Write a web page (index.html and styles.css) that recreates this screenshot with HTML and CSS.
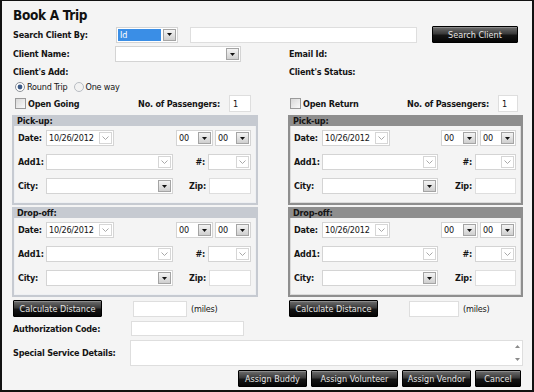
FILE: index.html
```html
<!DOCTYPE html>
<html lang="en">
<head>
    <meta charset="UTF-8">
    <title>Book A Trip</title>
    <link rel="stylesheet" href="styles.css">
</head>
<body>
<div class="page">
    <h1 class="title">Book A Trip</h1>

    <div class="row row-search">
        <span class="lbl w104">Search Client By:</span>
        <span class="combo w62">
            <span class="combo-val selected">Id</span>
            <span class="combo-btn"><svg width="5" height="3" viewBox="0 0 5 3"><path d="M0 0h5L2.5 3z"/></svg></span>
        </span>
        <input class="field w227 gap12" type="text">
        <button class="btn btn-search">Search Client</button>
    </div>

    <div class="cols row-info">
        <div class="col">
            <span class="lbl w103">Client Name:</span>
            <span class="combo w126">
                <span class="combo-val"></span>
                <span class="combo-btn"><svg width="5" height="3" viewBox="0 0 5 3"><path d="M0 0h5L2.5 3z"/></svg></span>
            </span>
        </div>
        <div class="col"><span class="lbl">Email Id:</span></div>
    </div>

    <div class="cols row-info row-add">
        <div class="col"><span class="lbl">Client's Add:</span></div>
        <div class="col"><span class="lbl">Client's Status:</span></div>
    </div>

    <div class="row row-radio">
        <span class="radio on"><svg width="10" height="10" viewBox="0 0 10 10"><circle cx="5" cy="5" r="4.5" fill="#fff" stroke="#8a8f96"/><circle cx="5" cy="5" r="2.4" fill="#3c5a86"/></svg></span>
        <span class="txt">Round Trip</span>
        <span class="radio"><svg width="10" height="10" viewBox="0 0 10 10"><circle cx="5" cy="5" r="4.5" fill="#f2f2f2" stroke="#b8bcc2"/></svg></span>
        <span class="txt">One way</span>
    </div>

    <div class="cols row-open">
        <div class="col col-open-l">
            <span class="check"></span>
            <span class="lbl">Open Going</span>
            <span class="lbl push">No. of Passengers:</span>
            <input class="field w22 gap9" type="text" value="1">
        </div>
        <div class="col col-open-r">
            <span class="check"></span>
            <span class="lbl">Open Return</span>
            <span class="lbl push">No. of Passengers:</span>
            <input class="field w20 gap9" type="text" value="1">
        </div>
    </div>

    <div class="cols row-panels">
        <div class="col-stack">
            <div class="panel panel-light">
                <div class="panel-head">Pick-up:</div>
                <div class="panel-body">
                    <div class="prow">
                        <span class="lbl plbl">Date:</span>
                        <span class="combo w68">
                            <span class="combo-val">10/26/2012</span>
                            <span class="combo-btn light"><svg width="7" height="4" viewBox="0 0 7 4"><path d="M0.5 0.5L3.5 3.5L6.5 0.5"/></svg></span>
                        </span>
                        <span class="combo w37 push">
                            <span class="combo-val">00</span>
                            <span class="combo-btn"><svg width="5" height="3" viewBox="0 0 5 3"><path d="M0 0h5L2.5 3z"/></svg></span>
                        </span>
                        <span class="combo w36 gap2">
                            <span class="combo-val">00</span>
                            <span class="combo-btn"><svg width="5" height="3" viewBox="0 0 5 3"><path d="M0 0h5L2.5 3z"/></svg></span>
                        </span>
                    </div>
                    <div class="prow">
                        <span class="lbl plbl">Add1:</span>
                        <span class="combo grow">
                            <span class="combo-val"></span>
                            <span class="combo-btn light"><svg width="7" height="4" viewBox="0 0 7 4"><path d="M0.5 0.5L3.5 3.5L6.5 0.5"/></svg></span>
                        </span>
                        <span class="side">
                            <span class="lbl">#:</span>
                            <span class="combo w43">
                                <span class="combo-val"></span>
                                <span class="combo-btn light"><svg width="7" height="4" viewBox="0 0 7 4"><path d="M0.5 0.5L3.5 3.5L6.5 0.5"/></svg></span>
                            </span>
                        </span>
                    </div>
                    <div class="prow">
                        <span class="lbl plbl">City:</span>
                        <span class="combo grow">
                            <span class="combo-val"></span>
                            <span class="combo-btn"><svg width="5" height="3" viewBox="0 0 5 3"><path d="M0 0h5L2.5 3z"/></svg></span>
                        </span>
                        <span class="side">
                            <span class="lbl">Zip:</span>
                            <input class="field w42" type="text">
                        </span>
                    </div>
                </div>
            </div>
            <div class="panel panel-light">
                <div class="panel-head">Drop-off:</div>
                <div class="panel-body">
                    <div class="prow">
                        <span class="lbl plbl">Date:</span>
                        <span class="combo w68">
                            <span class="combo-val">10/26/2012</span>
                            <span class="combo-btn light"><svg width="7" height="4" viewBox="0 0 7 4"><path d="M0.5 0.5L3.5 3.5L6.5 0.5"/></svg></span>
                        </span>
                        <span class="combo w37 push">
                            <span class="combo-val">00</span>
                            <span class="combo-btn"><svg width="5" height="3" viewBox="0 0 5 3"><path d="M0 0h5L2.5 3z"/></svg></span>
                        </span>
                        <span class="combo w36 gap2">
                            <span class="combo-val">00</span>
                            <span class="combo-btn"><svg width="5" height="3" viewBox="0 0 5 3"><path d="M0 0h5L2.5 3z"/></svg></span>
                        </span>
                    </div>
                    <div class="prow">
                        <span class="lbl plbl">Add1:</span>
                        <span class="combo grow">
                            <span class="combo-val"></span>
                            <span class="combo-btn light"><svg width="7" height="4" viewBox="0 0 7 4"><path d="M0.5 0.5L3.5 3.5L6.5 0.5"/></svg></span>
                        </span>
                        <span class="side">
                            <span class="lbl">#:</span>
                            <span class="combo w43">
                                <span class="combo-val"></span>
                                <span class="combo-btn light"><svg width="7" height="4" viewBox="0 0 7 4"><path d="M0.5 0.5L3.5 3.5L6.5 0.5"/></svg></span>
                            </span>
                        </span>
                    </div>
                    <div class="prow">
                        <span class="lbl plbl">City:</span>
                        <span class="combo grow">
                            <span class="combo-val"></span>
                            <span class="combo-btn"><svg width="5" height="3" viewBox="0 0 5 3"><path d="M0 0h5L2.5 3z"/></svg></span>
                        </span>
                        <span class="side">
                            <span class="lbl">Zip:</span>
                            <input class="field w42" type="text">
                        </span>
                    </div>
                </div>
            </div>
        </div>

        <div class="col-stack">
            <div class="panel panel-dark">
                <div class="panel-head">Pick-up:</div>
                <div class="panel-body">
                    <div class="prow">
                        <span class="lbl plbl">Date:</span>
                        <span class="combo w68">
                            <span class="combo-val">10/26/2012</span>
                            <span class="combo-btn light"><svg width="7" height="4" viewBox="0 0 7 4"><path d="M0.5 0.5L3.5 3.5L6.5 0.5"/></svg></span>
                        </span>
                        <span class="combo w37 push">
                            <span class="combo-val">00</span>
                            <span class="combo-btn"><svg width="5" height="3" viewBox="0 0 5 3"><path d="M0 0h5L2.5 3z"/></svg></span>
                        </span>
                        <span class="combo w36 gap2">
                            <span class="combo-val">00</span>
                            <span class="combo-btn"><svg width="5" height="3" viewBox="0 0 5 3"><path d="M0 0h5L2.5 3z"/></svg></span>
                        </span>
                    </div>
                    <div class="prow">
                        <span class="lbl plbl">Add1:</span>
                        <span class="combo grow">
                            <span class="combo-val"></span>
                            <span class="combo-btn light"><svg width="7" height="4" viewBox="0 0 7 4"><path d="M0.5 0.5L3.5 3.5L6.5 0.5"/></svg></span>
                        </span>
                        <span class="side">
                            <span class="lbl">#:</span>
                            <span class="combo w41">
                                <span class="combo-val"></span>
                                <span class="combo-btn light"><svg width="7" height="4" viewBox="0 0 7 4"><path d="M0.5 0.5L3.5 3.5L6.5 0.5"/></svg></span>
                            </span>
                        </span>
                    </div>
                    <div class="prow">
                        <span class="lbl plbl">City:</span>
                        <span class="combo grow">
                            <span class="combo-val"></span>
                            <span class="combo-btn"><svg width="5" height="3" viewBox="0 0 5 3"><path d="M0 0h5L2.5 3z"/></svg></span>
                        </span>
                        <span class="side">
                            <span class="lbl">Zip:</span>
                            <input class="field w41" type="text">
                        </span>
                    </div>
                </div>
            </div>
            <div class="panel panel-dark">
                <div class="panel-head">Drop-off:</div>
                <div class="panel-body">
                    <div class="prow">
                        <span class="lbl plbl">Date:</span>
                        <span class="combo w68">
                            <span class="combo-val">10/26/2012</span>
                            <span class="combo-btn light"><svg width="7" height="4" viewBox="0 0 7 4"><path d="M0.5 0.5L3.5 3.5L6.5 0.5"/></svg></span>
                        </span>
                        <span class="combo w37 push">
                            <span class="combo-val">00</span>
                            <span class="combo-btn"><svg width="5" height="3" viewBox="0 0 5 3"><path d="M0 0h5L2.5 3z"/></svg></span>
                        </span>
                        <span class="combo w36 gap2">
                            <span class="combo-val">00</span>
                            <span class="combo-btn"><svg width="5" height="3" viewBox="0 0 5 3"><path d="M0 0h5L2.5 3z"/></svg></span>
                        </span>
                    </div>
                    <div class="prow">
                        <span class="lbl plbl">Add1:</span>
                        <span class="combo grow">
                            <span class="combo-val"></span>
                            <span class="combo-btn light"><svg width="7" height="4" viewBox="0 0 7 4"><path d="M0.5 0.5L3.5 3.5L6.5 0.5"/></svg></span>
                        </span>
                        <span class="side">
                            <span class="lbl">#:</span>
                            <span class="combo w41">
                                <span class="combo-val"></span>
                                <span class="combo-btn light"><svg width="7" height="4" viewBox="0 0 7 4"><path d="M0.5 0.5L3.5 3.5L6.5 0.5"/></svg></span>
                            </span>
                        </span>
                    </div>
                    <div class="prow">
                        <span class="lbl plbl">City:</span>
                        <span class="combo grow">
                            <span class="combo-val"></span>
                            <span class="combo-btn"><svg width="5" height="3" viewBox="0 0 5 3"><path d="M0 0h5L2.5 3z"/></svg></span>
                        </span>
                        <span class="side">
                            <span class="lbl">Zip:</span>
                            <input class="field w41" type="text">
                        </span>
                    </div>
                </div>
            </div>
        </div>
    </div>

    <div class="cols row-calc">
        <div class="col">
            <button class="btn w89">Calculate Distance</button>
            <input class="field w54 gap31" type="text">
            <span class="txt miles">(miles)</span>
        </div>
        <div class="col">
            <button class="btn w89">Calculate Distance</button>
            <input class="field w50 gap31" type="text">
            <span class="txt miles">(miles)</span>
        </div>
    </div>

    <div class="row row-auth">
        <span class="lbl w119">Authorization Code:</span>
        <input class="field w113" type="text">
    </div>

    <div class="row row-special">
        <span class="lbl w119">Special Service Details:</span>
        <span class="area">
            <span class="area-scroll">
                <svg width="5" height="3" viewBox="0 0 5 3"><path d="M0 3h5L2.5 0z"/></svg>
                <svg width="5" height="3" viewBox="0 0 5 3"><path d="M0 0h5L2.5 3z"/></svg>
            </span>
        </span>
    </div>

    <div class="row row-actions">
        <button class="btn w69">Assign Buddy</button>
        <button class="btn w87">Assign Volunteer</button>
        <button class="btn w69">Assign Vendor</button>
        <button class="btn w46">Cancel</button>
    </div>
</div>
</body>
</html>
```

FILE: styles.css
```css
body {
    margin: 0;
    font-family: "DejaVu Sans Condensed", "DejaVu Sans", sans-serif;
    font-stretch: condensed;
    font-size: 9px;
    letter-spacing: -0.2px;
    color: #141414;
    background: #fff;
}
.page {
    width: 534px;
    height: 392px;
    box-sizing: border-box;
    border: 2px solid #111;
    border-top-width: 1px;
    background: #f4f4f4;
    padding: 0 9px 0 10px;
}
.title {
    margin: 0;
    padding: 6px 0 0 1px;
    font-size: 13.5px;
    line-height: 16px;
    font-weight: bold;
    letter-spacing: -0.3px;
    color: #111;
}

.row {
    display: flex;
    align-items: center;
}
.cols {
    display: grid;
    grid-template-columns: 246px 235px;
    column-gap: 30px;
}
.col {
    display: flex;
    align-items: center;
}

.lbl {
    box-sizing: border-box;
    font-weight: bold;
    white-space: nowrap;
    padding-left: 1px;
}
.txt {
    white-space: nowrap;
}
.grow { flex: 1; }

/* inputs */
.field {
    box-sizing: border-box;
    height: 16px;
    margin: 0;
    padding: 0 3px;
    border: 1px solid #dedede;
    background: #fff;
    font: inherit;
    color: #141414;
}

.combo {
    box-sizing: border-box;
    display: flex;
    height: 16px;
    border: 1px solid #d4d4d4;
    background: #fff;
}
.combo-val {
    flex: 1;
    padding: 0 2px;
    line-height: 14px;
    white-space: nowrap;
    overflow: hidden;
}
.combo-val.selected {
    background: #3a8ee6;
    color: #fff;
    margin: 1px;
    line-height: 12px;
}
.combo-btn {
    box-sizing: border-box;
    width: 13px;
    display: flex;
    align-items: center;
    justify-content: center;
    border: 1px solid #a4a4a4;
    background: linear-gradient(#f4f4f4, #cfcfcf);
    margin: 1px;
}
.combo-btn path {
    fill: #111;
}
.combo-btn.light {
    border-color: #d6d6d6;
    background: #fff;
}
.combo-btn.light path {
    fill: none;
    stroke: #a8a8a8;
    stroke-width: 1;
}

/* buttons */
.btn {
    box-sizing: border-box;
    height: 17px;
    margin: 0;
    padding: 0;
    border: 1px solid #000;
    border-radius: 1px;
    background: linear-gradient(#6e6e6e 0%, #3a3a3a 45%, #151515 55%, #050505 100%);
    color: #e6e6e6;
    font: inherit;
    white-space: nowrap;
    box-shadow: inset 0 1px 0 #8a8a8a;
}
.btn-search {
    width: 86px;
    margin-left: 15px;
}

/* top rows */
.row-search {
    margin-top: 3px;
    height: 17px;
}
.row-info {
    margin-top: 3px;
    height: 16px;
    align-items: center;
}
.row-add {
    margin-top: 2px;
}
.row-radio {
    height: 14px;
    padding-left: 3px;
}
.radio {
    display: flex;
    margin-right: 2px;
}
.radio + .txt {
    margin-right: 6px;
}
.row-open {
    margin-top: 1px;
    height: 17px;
}
.col-open-l { padding-left: 3px; padding-right: 7px; }
.col-open-r { padding-left: 2px; padding-right: 5px; }
.row-open .field { height: 17px; }
.check {
    box-sizing: border-box;
    width: 11px;
    height: 11px;
    border: 1px solid #9a9a9a;
    background: linear-gradient(135deg, #d8d8d8, #fafafa);
    margin-right: 1px;
}

/* panels */
.row-panels {
    margin-top: 3px;
}
.col-stack {
    display: flex;
    flex-direction: column;
    gap: 2px;
}
.panel {
    box-sizing: border-box;
    height: 90px;
    border: 2px solid #c6cad1;
    box-shadow: inset 0 0 0 1px #eef0f3;
}
.panel-head {
    height: 9px;
    line-height: 9px;
    padding-left: 3px;
    font-weight: bold;
    background: #c6cad1;
}
.panel-dark {
    border-color: #8e8e8e;
    box-shadow: inset 0 0 0 1px #dadada;
}
.panel-dark .panel-head {
    background: #8e8e8e;
}
.panel-body {
    display: flex;
    flex-direction: column;
    gap: 8px;
    padding: 4px 5px 0 3px;
}
.prow {
    display: flex;
    align-items: center;
    height: 16px;
}
.plbl {
    width: 29px;
}
.side {
    width: 78px;
    display: flex;
    align-items: center;
    justify-content: flex-end;
    gap: 3px;
}

/* bottom */
.row-calc {
    margin-top: 3px;
    height: 17px;
}
.row-calc .btn { margin-left: 1px; }
.miles { margin-left: 4px; }
.row-auth {
    margin-top: 4px;
    height: 15px;
}
.row-auth .field { height: 15px; }
.row-special {
    margin-top: 4px;
    height: 26px;
}
.area {
    box-sizing: border-box;
    width: 395px;
    height: 26px;
    border: 1px solid #dedede;
    background: #fff;
    display: flex;
    justify-content: flex-end;
}
.area-scroll {
    width: 9px;
    display: flex;
    flex-direction: column;
    justify-content: space-between;
    align-items: center;
    padding: 4px 0;
}
.area-scroll path { fill: #8a8a8a; }
.row-actions {
    margin-top: 4px;
    justify-content: flex-end;
    gap: 4px;
    padding-right: 2px;
}

/* sizes and spacing, kept last so they win over component margins */
.push { margin-left: auto; }
.w20 { width: 20px; }
.w22 { width: 22px; }
.w36 { width: 36px; }
.w37 { width: 37px; }
.w41 { width: 41px; }
.w42 { width: 42px; }
.w43 { width: 43px; }
.w46 { width: 46px; }
.w50 { width: 50px; }
.w54 { width: 54px; }
.w62 { width: 62px; }
.w68 { width: 68px; }
.w69 { width: 69px; }
.w87 { width: 87px; }
.w89 { width: 89px; }
.w103 { width: 103px; }
.w104 { width: 104px; }
.w113 { width: 113px; }
.w119 { width: 119px; }
.w126 { width: 126px; }
.w227 { width: 227px; }
.gap2 { margin-left: 2px; }
.gap9 { margin-left: 9px; }
.gap12 { margin-left: 12px; }
.gap31 { margin-left: 31px; }
```
